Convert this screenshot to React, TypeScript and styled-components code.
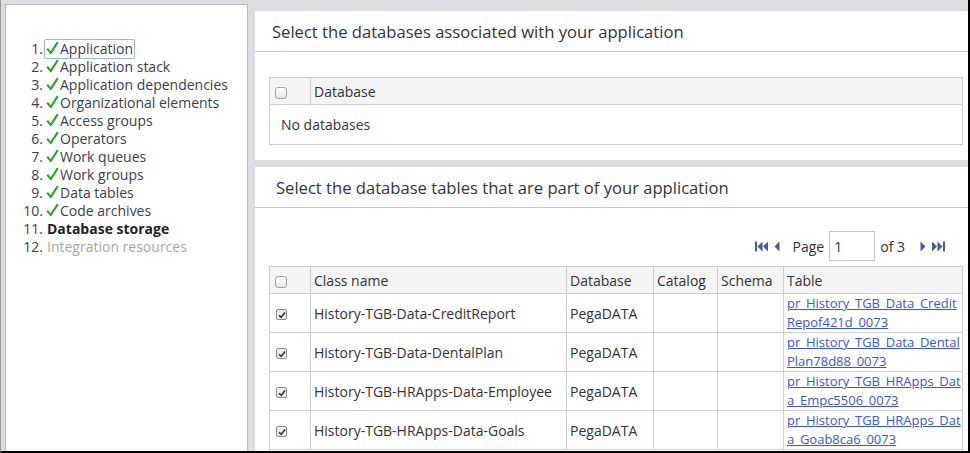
import styled, { createGlobalStyle } from 'styled-components'

const GlobalStyle = createGlobalStyle`
    html, body {
        margin: 0;
        padding: 0;
        background: #ffffff;
    }
    body {
        font-family: 'Open Sans', 'Noto Sans', sans-serif;
        color: #333;
    }
`

type Step = {
    label: string
    state: 'done' | 'current' | 'todo'
}

const steps: Step[] = [
    { label: 'Application', state: 'done' },
    { label: 'Application stack', state: 'done' },
    { label: 'Application dependencies', state: 'done' },
    { label: 'Organizational elements', state: 'done' },
    { label: 'Access groups', state: 'done' },
    { label: 'Operators', state: 'done' },
    { label: 'Work queues', state: 'done' },
    { label: 'Work groups', state: 'done' },
    { label: 'Data tables', state: 'done' },
    { label: 'Code archives', state: 'done' },
    { label: 'Database storage', state: 'current' },
    { label: 'Integration resources', state: 'todo' },
]

type TableRow = {
    className: string
    database: string
    table: [string, string]
}

const rows: TableRow[] = [
    { className: 'History-TGB-Data-CreditReport', database: 'PegaDATA', table: ['pr_History_TGB_Data_Credit', 'Repof421d_0073'] },
    { className: 'History-TGB-Data-DentalPlan', database: 'PegaDATA', table: ['pr_History_TGB_Data_Dental', 'Plan78d88_0073'] },
    { className: 'History-TGB-HRApps-Data-Employee', database: 'PegaDATA', table: ['pr_History_TGB_HRApps_Dat', 'a_Empc5506_0073'] },
    { className: 'History-TGB-HRApps-Data-Goals', database: 'PegaDATA', table: ['pr_History_TGB_HRApps_Dat', 'a_Goab8ca6_0073'] },
]

const GreenCheck = () => (
    <svg width="13" height="14" viewBox="0 0 13 14">
        <path d="M1.2 7.6 L4.8 12 L11.8 1.2" fill="none" stroke="#2ea62e" strokeWidth="2.2" strokeLinejoin="round" />
    </svg>
)

// 표 안의 체크박스
const Box = ({ checked }: { checked?: boolean }) => (
    <CheckBox $checked={checked}>
        {checked && (
            <svg width="8" height="8" viewBox="0 0 8 8">
                <path d="M1 4.2 L3.2 6.4 L7 1.4" fill="none" stroke="#333" strokeWidth="1.6" />
            </svg>
        )}
    </CheckBox>
)

const PagerIcon = ({ kind }: { kind: 'first' | 'prev' | 'next' | 'last' }) => {
    if (kind === 'first') {
        return (
            <svg width="14" height="11" viewBox="0 0 14 11">
                <rect x="0" y="0.5" width="2" height="10" fill="#4a5b9c" />
                <path d="M7.5 0.5 L2.5 5.5 L7.5 10.5 Z M13 0.5 L8 5.5 L13 10.5 Z" fill="#4a5b9c" />
            </svg>
        )
    }
    if (kind === 'last') {
        return (
            <svg width="14" height="11" viewBox="0 0 14 11">
                <path d="M1 0.5 L6 5.5 L1 10.5 Z M6.5 0.5 L11.5 5.5 L6.5 10.5 Z" fill="#4a5b9c" />
                <rect x="12" y="0.5" width="2" height="10" fill="#4a5b9c" />
            </svg>
        )
    }
    return (
        <svg width="6" height="11" viewBox="0 0 6 11">
            <path d={kind === 'prev' ? 'M5.5 0.5 L0.5 5.5 L5.5 10.5 Z' : 'M0.5 0.5 L5.5 5.5 L0.5 10.5 Z'} fill="#4a5b9c" />
        </svg>
    )
}

function App() {
    return (
        <>
            <GlobalStyle />
            <Frame>
                <Sidebar>
                    <StepList>
                        {steps.map((step, i) => (
                            <StepItem key={step.label}>
                                <StepNumber>{i + 1}.</StepNumber>
                                {step.state === 'done' ? (
                                    <StepLink $focused={i === 0}>
                                        <GreenCheck />
                                        <span>{step.label}</span>
                                    </StepLink>
                                ) : (
                                    <StepLabel $state={step.state}>{step.label}</StepLabel>
                                )}
                            </StepItem>
                        ))}
                    </StepList>
                </Sidebar>

                <Main>
                    <Panel>
                        <PanelHeader $indent={17}>Select the databases associated with your application</PanelHeader>
                        <PanelBody $top={25} $bottom={15}>
                            <Grid>
                                <colgroup>
                                    <col style={{ width: 41 }} />
                                    <col />
                                </colgroup>
                                <thead>
                                    <tr>
                                        <HeadCell><Box /></HeadCell>
                                        <HeadCell>Database</HeadCell>
                                    </tr>
                                </thead>
                                <tbody>
                                    <tr>
                                        <EmptyCell colSpan={2}>No databases</EmptyCell>
                                    </tr>
                                </tbody>
                            </Grid>
                        </PanelBody>
                    </Panel>

                    <Panel $grow>
                        <PanelHeader $indent={21}>Select the database tables that are part of your application</PanelHeader>
                        <PanelBody $top={22} $bottom={0}>
                            <Pager>
                                <PagerButtons>
                                    <PagerIcon kind="first" />
                                    <PagerIcon kind="prev" />
                                </PagerButtons>
                                <span>Page</span>
                                <PageInput defaultValue="1" />
                                <span>of 3</span>
                                <PagerButtons $wide>
                                    <PagerIcon kind="next" />
                                    <PagerIcon kind="last" />
                                </PagerButtons>
                            </Pager>
                            <Grid>
                                <colgroup>
                                    <col style={{ width: 41 }} />
                                    <col style={{ width: 256 }} />
                                    <col style={{ width: 87 }} />
                                    <col style={{ width: 64 }} />
                                    <col style={{ width: 66 }} />
                                    <col />
                                </colgroup>
                                <thead>
                                    <tr>
                                        <HeadCell><Box /></HeadCell>
                                        <HeadCell>Class name</HeadCell>
                                        <HeadCell>Database</HeadCell>
                                        <HeadCell>Catalog</HeadCell>
                                        <HeadCell>Schema</HeadCell>
                                        <HeadCell>Table</HeadCell>
                                    </tr>
                                </thead>
                                <tbody>
                                    {rows.map(row => (
                                        <tr key={row.className}>
                                            <Cell><Box checked /></Cell>
                                            <Cell>{row.className}</Cell>
                                            <Cell>{row.database}</Cell>
                                            <Cell />
                                            <Cell />
                                            <LinkCell>
                                                <TableLink href="#">
                                                    {row.table[0]}
                                                    <br />
                                                    {row.table[1]}
                                                </TableLink>
                                            </LinkCell>
                                        </tr>
                                    ))}
                                </tbody>
                            </Grid>
                        </PanelBody>
                    </Panel>
                </Main>
            </Frame>
        </>
    )
}

export default App

const Frame = styled.div`
    box-sizing: border-box;
    width: 970px;
    height: 453px;
    display: flex;
    gap: 7px;
    padding: 4px 0 0 4px;
    background-color: #dcdde2;
    border-left: 1px solid #9a9a9a;
    border-right: 2px solid #000;
    border-bottom: 2px solid #000;
    overflow: hidden;
`

const Sidebar = styled.aside`
    box-sizing: border-box;
    width: 243px;
    flex-shrink: 0;
    background-color: #ffffff;
    border: 1px solid #b9b9bd;
    border-bottom: none;
    padding-top: 35px;
`

const StepList = styled.ol`
    list-style: none;
    margin: 0;
    padding: 0;
`

const StepItem = styled.li`
    display: flex;
    align-items: center;
    height: 18px;
    font-size: 14px;
    line-height: 18px;
    color: #3d3d4c;
`

const StepNumber = styled.span`
    width: 37px;
    text-align: right;
    margin-right: 2px;
`

const StepLink = styled.span<{ $focused?: boolean }>`
    display: inline-flex;
    align-items: center;
    height: 18px;
    padding: 0 1px 0 1px;
    border: 1px solid ${p => (p.$focused ? '#9ab6ee' : 'transparent')};
    border-radius: 2px;
    margin-left: -1px;

    svg {
        margin-right: 1px;
        margin-top: -2px;
    }
`

const StepLabel = styled.span<{ $state: 'current' | 'todo' }>`
    padding-left: 2px;
    font-weight: ${p => (p.$state === 'current' ? 700 : 400)};
    color: ${p => (p.$state === 'current' ? '#1e1e2e' : '#a9a8a0')};
`

const Main = styled.main`
    flex: 1;
    display: flex;
    flex-direction: column;
    gap: 7px;
    padding-top: 7px;
    min-width: 0;
`

const Panel = styled.section<{ $grow?: boolean }>`
    background-color: #ffffff;
    flex: ${p => (p.$grow ? 1 : 'none')};
`

const PanelHeader = styled.h2<{ $indent: number }>`
    box-sizing: border-box;
    margin: 0;
    height: 41px;
    padding-left: ${p => p.$indent}px;
    padding-top: 1px;
    display: flex;
    align-items: center;
    font-size: 16.6px;
    font-weight: 400;
    color: #333340;
    border-bottom: 1px solid #c9cad1;
`

const PanelBody = styled.div<{ $top: number; $bottom: number }>`
    padding: ${p => p.$top}px 5px ${p => p.$bottom}px 14px;
`

const Grid = styled.table`
    width: 100%;
    border-collapse: collapse;
    table-layout: fixed;
    font-size: 14px;
    color: #333;
`

const HeadCell = styled.th`
    height: 26px;
    padding: 0 3px;
    text-align: left;
    font-weight: 400;
    background-color: #f4f4f4;
    border: 1px solid #cfcfcf;
`

const Cell = styled.td`
    height: 38px;
    padding: 0 3px;
    border: 1px solid #cfcfcf;
    white-space: nowrap;
`

const EmptyCell = styled.td`
    height: 39px;
    padding: 0 11px;
    border: 1px solid #cfcfcf;
`

const LinkCell = styled(Cell)`
    font-size: 13px;
    line-height: 19px;
`

const TableLink = styled.a`
    color: #3c55d8;
    text-decoration: underline;
`

const CheckBox = styled.span<{ $checked?: boolean }>`
    box-sizing: border-box;
    display: inline-flex;
    align-items: center;
    justify-content: center;
    vertical-align: middle;
    margin-left: ${p => (p.$checked ? 3 : 2)}px;
    width: ${p => (p.$checked ? 11 : 12)}px;
    height: ${p => (p.$checked ? 11 : 12)}px;
    border: 1px solid ${p => (p.$checked ? '#8a8a8a' : '#a5a5a5')};
    border-radius: ${p => (p.$checked ? 2 : 3)}px;
    background: ${p => (p.$checked ? '#ededed' : 'linear-gradient(#ffffff, #e6e6e6)')};
`

const Pager = styled.div`
    display: flex;
    align-items: center;
    justify-content: flex-end;
    gap: 5px;
    height: 30px;
    margin-top: 1px;
    margin-bottom: 5px;
    padding-right: 10px;
    font-size: 14px;
    color: #333;
`

const PagerButtons = styled.span<{ $wide?: boolean }>`
    display: inline-flex;
    align-items: center;
    gap: 5px;
    margin-right: 8px;
    margin-left: ${p => (p.$wide ? 10 : 0)}px;
`

const PageInput = styled.input`
    box-sizing: border-box;
    width: 46px;
    height: 30px;
    border: 1px solid #c4c4c4;
    padding: 0 4px;
    font-family: inherit;
    font-size: 14px;
    color: #333;
    outline: none;
`
